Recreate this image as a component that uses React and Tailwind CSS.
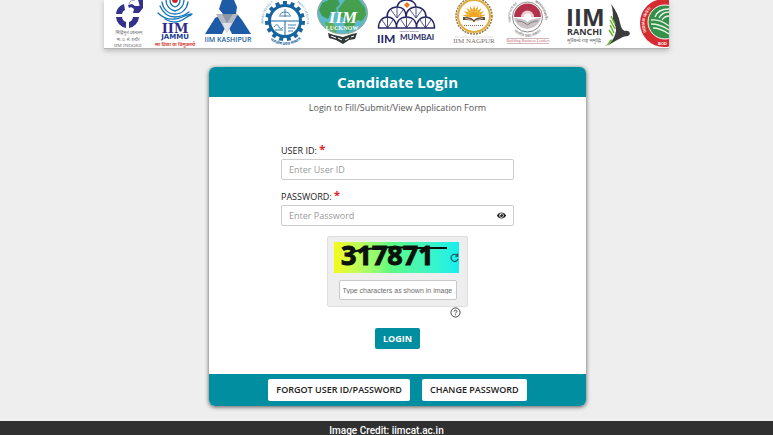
import { useState } from 'react';
import { FaEye } from 'react-icons/fa';

const TEETH = [0, 24, 48, 72, 96, 120, 144, 168, 192, 216, 240, 264, 288, 312, 336];
const RAYS = [-80, -60, -40, -20, 0, 20, 40, 60, 80];

function IndoreLogo() {
  return (
    <svg viewBox="104 0 46 48" className="h-12 w-[46px] shrink-0" role="img" aria-label="IIM Indore">
      <g fill="#34318c">
        <path d="M116 14a12 12 0 0 1 8-10l1 6a5 5 0 0 0-3 4z" />
        <path d="M116 17h6a6 6 0 0 0 4 5v6a12 12 0 0 1-10-11z" />
        <path d="M129 28v-6a6 6 0 0 0 4-5h6a12 12 0 0 1-10 11z" />
        <path d="M128 5l4-1 3 2 4 0 4-2v4l-4 5h-6l1-4-3-2-2 1z" />
        <path d="M138 0h5v6l-3 2-1-5z" />
      </g>
      <path d="M129 4c1-3 3-4 6-4" fill="none" stroke="#8f8dbd" strokeWidth="1" />
      <g textAnchor="middle" fill="#6c6c74">
        <text x="129" y="34" className="font-['Noto_Sans'] text-[4px]">सिद्धिमूलं प्रबन्धनम्</text>
        <text x="128" y="41" className="font-['Noto_Sans'] text-[4px]">भा. प्र. सं. इन्दौर</text>
        <text x="128" y="47" className="font-['Liberation_Serif'] text-[5px]">IIM INDORE</text>
      </g>
    </svg>
  );
}

function JammuLogo() {
  return (
    <svg viewBox="150 0 50 48" className="h-12 w-[50px] shrink-0" role="img" aria-label="IIM Jammu">
      <circle cx="175" cy="0" r="3" fill="#d3232a" />
      <g fill="none" stroke="#1273b5" strokeWidth="1.300" strokeLinecap="round">
        <path d="M166 0c0 6 4 10 9 11 5-1 9-5 9-11" />
        <path d="M170 0c0 3 2 6 5 7 3-1 5-4 5-7" />
        <path d="M162 2c1 7 6 12 13 12 7 0 12-5 13-12" />
        <path d="M160 6c3 7 8 11 15 11 6 0 10-2 14-5" />
        <path d="M158 13c5 5 10 7 17 6 6 0 11-5 17-5" />
        <path d="M191 15c-5 1-8 7-15 7-5 0-8-1-11-3" />
      </g>
      <g textAnchor="middle">
        <text x="175" y="33" fill="#2d2a86" className="font-['DejaVu_Serif'] text-[13px] font-bold">IIM</text>
        <text x="175" y="39" fill="#1c3f94" className="font-['DejaVu_Sans'] text-[7px] font-bold">JAMMU</text>
        <text x="175" y="46" fill="#d6453d" className="font-['Noto_Sans'] text-[5px] font-bold">सा विद्या या विमुक्तये</text>
      </g>
    </svg>
  );
}

function KashipurLogo() {
  return (
    <svg viewBox="200 0 56 48" className="h-12 w-14 shrink-0" role="img" aria-label="IIM Kashipur">
      <g fill="#1d5ba6">
        <path d="M222 0h12l3 7-1 7h-13l-4-5z" />
        <path d="M215 18l6-3 6 9-5 10h-17z" />
        <path d="M232 17l6-2 4 5 9 14h-19l-5-10z" />
      </g>
      <path d="M216 14h22l-11 19z" fill="#b4bac4" />
      <path d="M222 14h11l-6 9z" fill="#8d97a8" />
      <path d="M222 23h10l-5 10z" fill="#dfe2e8" />
      <text x="228" y="42" textAnchor="middle" fill="#20609f" className="font-['Open_Sans'] text-[7px] font-semibold">
        IIM KASHIPUR
      </text>
    </svg>
  );
}

function GearLogo() {
  return (
    <svg viewBox="256 0 57 48" className="h-12 w-[57px] shrink-0" role="img" aria-label="IIM Calcutta">
      <defs>
        <path id="gearLeft" d="M263.500 24a21.500 21.500 0 0 1 10-21.500" />
        <path id="gearRight" d="M297 2.500a21.500 21.500 0 0 1 9.500 21.500" />
        <path id="gearBottom" d="M268 38a24 24 0 0 0 34 0" />
      </defs>
      <g fill="#17649f">
        {TEETH.map((angle) => (
          <rect key={angle} x="283" y="1" width="4" height="4" transform={`rotate(${angle} 285 21)`} />
        ))}
      </g>
      <g fill="none" stroke="#17649f">
        <circle cx="285" cy="21" r="15.500" strokeWidth="3" />
        <path d="M271 21h28M285 21v14" strokeWidth="1" />
        <path d="M280 15c1-4 9-4 10 0M285 9v8M279 16h12M274 27c2-3 4-3 5 0s3 2 4 0M275 30h8M288 25h8M288 28h7M288 31h5" strokeWidth="0.800" />
      </g>
      <g fill="#3f7fae" className="font-['Liberation_Sans'] text-[3px]">
        <text>
          <textPath href="#gearLeft">INDIAN INSTITUTE</textPath>
        </text>
        <text>
          <textPath href="#gearRight">MENT CALCUTTA</textPath>
        </text>
      </g>
      <text fill="#17649f" className="font-['Noto_Sans'] text-[4px] font-bold">
        <textPath href="#gearBottom" startOffset="8%">भारतीय प्रबंध संस्थान</textPath>
      </text>
    </svg>
  );
}

function LucknowLogo() {
  return (
    <svg viewBox="313 0 59 48" className="h-12 w-[59px] shrink-0" role="img" aria-label="IIM Lucknow">
      <ellipse cx="342.500" cy="13" rx="25" ry="21" fill="#5cb9cb" stroke="#9aa88f" strokeWidth="1" />
      <path d="M322 3l7-3h9l2 4-4 4 1 3-6 2-3 6-6-3-3-6z" fill="#3f9a4d" />
      <path d="M345 0h14l6 8 1 7-4 6-5-1-4 8-6 4-3-6 2-7-6-3-2-7 4-5z" fill="#469f4d" />
      <path d="M324 22l9 1 4 5-1 5-8-4z" fill="#5fae51" />
      <path d="M328 33l6 2 9 2 9-3 5-1-2 6-6 1-6 4-7-4-7-2z" fill="#303838" />
      <path d="M331 36l5 2m2 0l4 2m3 0l4-2m2-1l3-1" stroke="#fff" strokeWidth="1" />
      <g textAnchor="middle" fill="#ffffff">
        <text x="343" y="23" className="font-['Liberation_Serif'] text-[17px] font-bold italic">IIM</text>
        <text x="342" y="30" className="font-['Liberation_Serif'] text-[6px] font-bold">LUCKNOW</text>
      </g>
    </svg>
  );
}

function MumbaiLogo() {
  return (
    <svg viewBox="372 0 70 48" className="h-12 w-[70px] shrink-0" role="img" aria-label="IIM Mumbai">
      <g fill="none" stroke="#252664" strokeWidth="1.500">
        <path d="M378 28h57" />
        <path d="M378.500 28c0-7 4-11 9-11s9 4 9 11c0-7 4-11 10-11s10 4 10 11c0-7 4-11 9-11s9 4 9 11" />
        <path d="M387 17c0-6 4-10 10-10s9 4 9 10c0-6 4-10 10-10s10 4 10 10" />
        <path d="M397 7c1-4 4-7 9.500-7s9.500 3 9.500 7" />
        <path d="M387.500 18v10M406.500 18v10M425.500 18v10M397 8v10M416 8v10" strokeWidth="0.800" />
        <path d="M382 20l5.500 8 5.500-8M401 20l5.500 8 5.500-8M420 20l5.500 8 5.500-8M391 10l6 8 6-8M410 10l6 8 6-8" strokeWidth="0.800" />
      </g>
      <path d="M407 2l3 3-3 3-3-3z" fill="#e97920" />
      <text x="409" y="32" textAnchor="middle" fill="#44456e" className="font-['Noto_Sans'] text-[2px]">भारतीय प्रबंध संस्थान मुंबई</text>
      <text x="377" y="43" fill="#252664" className="font-['Lato'] text-[12px] font-bold">IIM</text>
      <text x="400" y="40" fill="#252664" className="font-['Lato'] text-[8px] font-bold">MUMBAI</text>
    </svg>
  );
}

function NagpurLogo() {
  return (
    <svg viewBox="442 0 58 48" className="h-12 w-[58px] shrink-0" role="img" aria-label="IIM Nagpur">
      <circle cx="474" cy="16" r="18" fill="#fff" stroke="#8f764c" strokeWidth="1.500" strokeDasharray="2 1" />
      <circle cx="474" cy="16" r="16" fill="none" stroke="#e1ad3c" strokeWidth="2" />
      <g fill="#efa620">
        {RAYS.map((angle) => (
          <path key={angle} d="M472.500 11l1.500-6 1.500 6z" transform={`rotate(${angle} 474 17)`} />
        ))}
        <path d="M468 17a6 6 0 0 1 12 0z" />
      </g>
      <path d="M463 17c5 0 8 0 11 3 3-3 6-3 11-3v3c-5 0-8 0-11 2-3-2-6-2-11-2z" fill="#68503a" />
      <path d="M465 18l8 3m2 0l8-3" stroke="#fff" strokeWidth="0.600" />
      <path d="M464 25.500h20" stroke="#807153" strokeWidth="1" strokeDasharray="1 1" />
      <text x="474" y="43" textAnchor="middle" fill="#77716e" className="font-['Liberation_Serif'] text-[7px]">IIM NAGPUR</text>
      <path d="M455 37h38" stroke="#c6c3bf" strokeWidth="0.500" />
    </svg>
  );
}

function BusinessLogo() {
  return (
    <svg viewBox="500 0 58 48" className="h-12 w-[58px] shrink-0" role="img" aria-label="Indian Institute of Management">
      <defs>
        <path id="sealLeft" d="M511 22a17 17 0 0 1 9-20" />
        <path id="sealRight" d="M535 2a17 17 0 0 1 9 20" />
        <path id="sealBottom" d="M509.500 24a19 19 0 0 0 36 0" />
      </defs>
      <circle cx="527.500" cy="17" r="15" fill="#fff" stroke="#8f888b" strokeWidth="1" />
      <path d="M514 17a13.500 13.500 0 0 1 27 0z" fill="#b3324b" />
      <path d="M521 17a6.500 6.500 0 0 1 13 0z" fill="#f0cfd4" />
      <path d="M524 17a3.500 3.500 0 0 1 7 0z" fill="#fff" />
      <path d="M514 18c5 0 10 1 13.500 4 3.500-3 8.500-4 13.500-4-2 7-7 10-13.500 11-6.500-1-11.500-4-13.500-11z" fill="#c9c3c6" />
      <path d="M517 21c4 0 7 1 10.500 4 3.500-3 6.500-4 10.500-4" fill="none" stroke="#716b71" strokeWidth="0.800" />
      <g fill="#6e686c" className="font-['Liberation_Sans'] text-[3px] font-bold">
        <text>
          <textPath href="#sealLeft">INSTITUTE OF</textPath>
        </text>
        <text>
          <textPath href="#sealRight">MANAGEMENT</textPath>
        </text>
      </g>
      <text fill="#6e686c" className="font-['Noto_Sans'] text-[4px]">
        <textPath href="#sealBottom" startOffset="18%">भारतीय प्रबंध संस्थान</textPath>
      </text>
      <path d="M507 38.500h42M507 43.500h42" stroke="#b6868c" strokeWidth="0.600" />
      <text x="528" y="42" textAnchor="middle" fill="#bd6470" className="font-['Liberation_Serif'] text-[4px]">Building Business Leaders</text>
    </svg>
  );
}

function RanchiLogo() {
  return (
    <svg viewBox="558 0 78 48" className="h-12 w-[78px] shrink-0" role="img" aria-label="IIM Ranchi">
      <path d="M611 4c5 6 8 13 9 19 1 4 2 7 5 8 2-1 5 0 5 3l-2 2c-5 0-9 3-21 10 5-4 8-9 9-15 0-4-1-7-3-10 0-6 0-11-2-17z" fill="#3b3c3f" />
      <path d="M611 16l4 8M610 20l5 9M610 25l4 8M609 30l4 6" stroke="#65b32e" strokeWidth="1.500" />
      <path d="M605 46c4-1 7-4 8-7l-3 1c-1 2-2 4-5 6z" fill="#65b32e" />
      <text x="566" y="26" fill="#333437" className="font-['Open_Sans'] text-[24px] font-bold">IIM</text>
      <text x="567" y="35" fill="#333437" className="font-['Open_Sans'] text-[9px] font-bold">RANCHI</text>
      <text x="567" y="42" fill="#68696c" className="font-['Noto_Sans'] text-[5px]">सुप्रबन्धे राष्ट्र समृद्धि</text>
    </svg>
  );
}

function GreenLogo() {
  return (
    <svg viewBox="636 0 33 48" className="h-12 w-[33px] shrink-0" role="img" aria-label="Indian Institute of Management">
      <defs>
        <path id="redRing" d="M646.500 32a20 20 0 0 1 10.500-27" />
      </defs>
      <circle cx="664" cy="23" r="24" fill="#d52b31" />
      <circle cx="665" cy="22" r="17" fill="#35904a" stroke="#fff" strokeWidth="1" />
      <g fill="none" stroke="#e7f5e7" strokeWidth="1.300">
        <path d="M651 20c7-1 12 1 18 6M651 24c6 0 12 2 18 6M653 28c5 0 10 2 16 6" />
        <path d="M655 17c2-6 7-8 14-8M659 18c2-4 5-6 10-6M662 20c2-3 4-4 7-4" />
      </g>
      <text fill="#fff" className="font-['Liberation_Sans'] text-[4px] font-bold">
        <textPath href="#redRing">INDIAN INSTI</textPath>
      </text>
      <text x="658" y="45" fill="#fff" className="font-['Liberation_Sans'] text-[4px] font-bold">BOD</text>
    </svg>
  );
}

function Captcha({ value, onChange }) {
  return (
    <div className="mt-[10px] flex w-[141px] flex-col items-center self-center rounded-xs border border-[#dedede] bg-[#eeeeee] px-[6px] pt-[5px] pb-[6px]">
      <div className="relative mr-[2px] h-[31px] w-[125px] bg-linear-to-r from-[#f4fb08] via-[#5dfb81] via-45% to-[#16eeee]">
        <svg viewBox="0 0 125 31" className="h-full w-full" role="img" aria-label="Captcha image">
          <text x="7" y="23" fill="#0b120b" stroke="#0b120b" strokeWidth="1" className="font-['Open_Sans'] text-[27px] leading-none font-bold">317871</text>
          <path d="M12 14l5-4 16-3 25-2 20 1h35" fill="none" stroke="#0b120b" strokeWidth="2" />
        </svg>
        <button type="button" aria-label="Refresh captcha" className="absolute right-0 bottom-[10px] cursor-pointer">
          <svg viewBox="0 0 10 10" className="h-[10px] w-[9px]" fill="none" stroke="#174d55" strokeWidth="1.300">
            <path d="M8 2A4 4 0 1 0 9 6" />
            <path d="M8.500 0v3H6" />
          </svg>
        </button>
      </div>
      <input
        type="text"
        aria-label="Type characters as shown in image"
        placeholder="Type characters as shown in image"
        value={value}
        onChange={onChange}
        className="mt-[7px] h-5 w-[118px] rounded-xs border border-[#c9c9c9] bg-white px-[3px] font-['Liberation_Sans',sans-serif] text-[7px] text-gray-800 outline-none placeholder:text-[#6d6d6d]"
      />
    </div>
  );
}

export default function App() {
  const [userId, setUserId] = useState('');
  const [password, setPassword] = useState('');
  const [showPassword, setShowPassword] = useState(false);
  const [captcha, setCaptcha] = useState('');

  const handleSubmit = (e) => {
    e.preventDefault();
  };

  return (
    <div className="flex min-h-screen flex-col bg-[#eeeeee] font-['Open_Sans',sans-serif]">
      <header className="mx-[104px] flex overflow-hidden border-b border-[#b5b5b5] bg-white shadow-[0_2px_5px_#bbbbbb]">
        <IndoreLogo />
        <JammuLogo />
        <KashipurLogo />
        <GearLogo />
        <LucknowLogo />
        <MumbaiLogo />
        <NagpurLogo />
        <BusinessLogo />
        <RanchiLogo />
        <GreenLogo />
      </header>

      <main className="flex flex-1 items-start justify-center pt-[18px] pb-[14px] pl-[22px]">
        <form onSubmit={handleSubmit} className="flex w-full max-w-[377px] flex-col overflow-hidden rounded-md bg-white shadow-[0_1px_4px_#555555]">
          <h1 className="bg-[#028ea1] text-center text-[15px] leading-[30px] font-bold text-white">Candidate Login</h1>
          <p className="mt-1 text-center text-[9px] leading-[14px] text-[#555555]">Login to Fill/Submit/View Application Form</p>

          <div className="mt-[28px] flex flex-col px-[72px]">
            <label htmlFor="userId" className="text-[9px] leading-4 font-medium text-[#222222]">
              USER ID: <span className="align-top text-[11px] leading-3 font-bold text-[#e02020]">*</span>
            </label>
            <input
              id="userId"
              type="text"
              placeholder="Enter User ID"
              value={userId}
              onChange={(e) => setUserId(e.target.value)}
              className="h-[21px] w-full rounded-xs border border-[#cccccc] bg-white px-[7px] text-[9px] text-gray-800 outline-none placeholder:text-[#999999]"
            />

            <label htmlFor="password" className="mt-[9px] text-[9px] leading-4 font-medium text-[#222222]">
              PASSWORD: <span className="align-top text-[11px] leading-3 font-bold text-[#e02020]">*</span>
            </label>
            <div className="flex h-[21px] items-center rounded-xs border border-[#cccccc] bg-white px-[7px]">
              <input
                id="password"
                type={showPassword ? 'text' : 'password'}
                placeholder="Enter Password"
                value={password}
                onChange={(e) => setPassword(e.target.value)}
                className="min-w-0 flex-1 text-[9px] text-gray-800 outline-none placeholder:text-[#999999]"
              />
              <button type="button" aria-label="Show password" onClick={() => setShowPassword(!showPassword)} className="cursor-pointer">
                <FaEye className="h-[9px] w-[9px] text-[#222222]" />
              </button>
            </div>

            <Captcha value={captcha} onChange={(e) => setCaptcha(e.target.value)} />
            <button type="button" aria-label="Captcha help" className="mr-[53px] cursor-pointer self-end">
              <svg viewBox="0 0 12 12" className="h-[11px] w-[11px]" fill="none" stroke="#333333" strokeWidth="1">
                <circle cx="6" cy="6" r="5" />
                <path d="M4.500 5c0-2 3-2 3 0 0 1-1.500 1-1.500 2M6 8v1" />
              </svg>
            </button>
            <button type="submit" className="mt-[10px] h-[21px] cursor-pointer self-center rounded-xs bg-[#028ea1] px-2 text-[9px] font-bold text-white">
              LOGIN
            </button>
          </div>

          <div className="mt-[25px] flex justify-center gap-3 bg-[#028ea1] px-4 py-[5px]">
            <button type="button" className="h-[22px] cursor-pointer rounded-xs bg-white px-2 text-[9px] font-semibold text-[#222222]">
              FORGOT USER ID/PASSWORD
            </button>
            <button type="button" className="h-[22px] cursor-pointer rounded-xs bg-white px-2 text-[9px] font-semibold text-[#222222]">
              CHANGE PASSWORD
            </button>
          </div>
        </form>
      </main>

      <footer className="h-[14px] overflow-hidden bg-[#303030] pt-[3px] text-center font-['Roboto',sans-serif] text-[10px] leading-[14px] font-medium text-white">
        Image Credit: iimcat.ac.in
      </footer>
    </div>
  );
}
